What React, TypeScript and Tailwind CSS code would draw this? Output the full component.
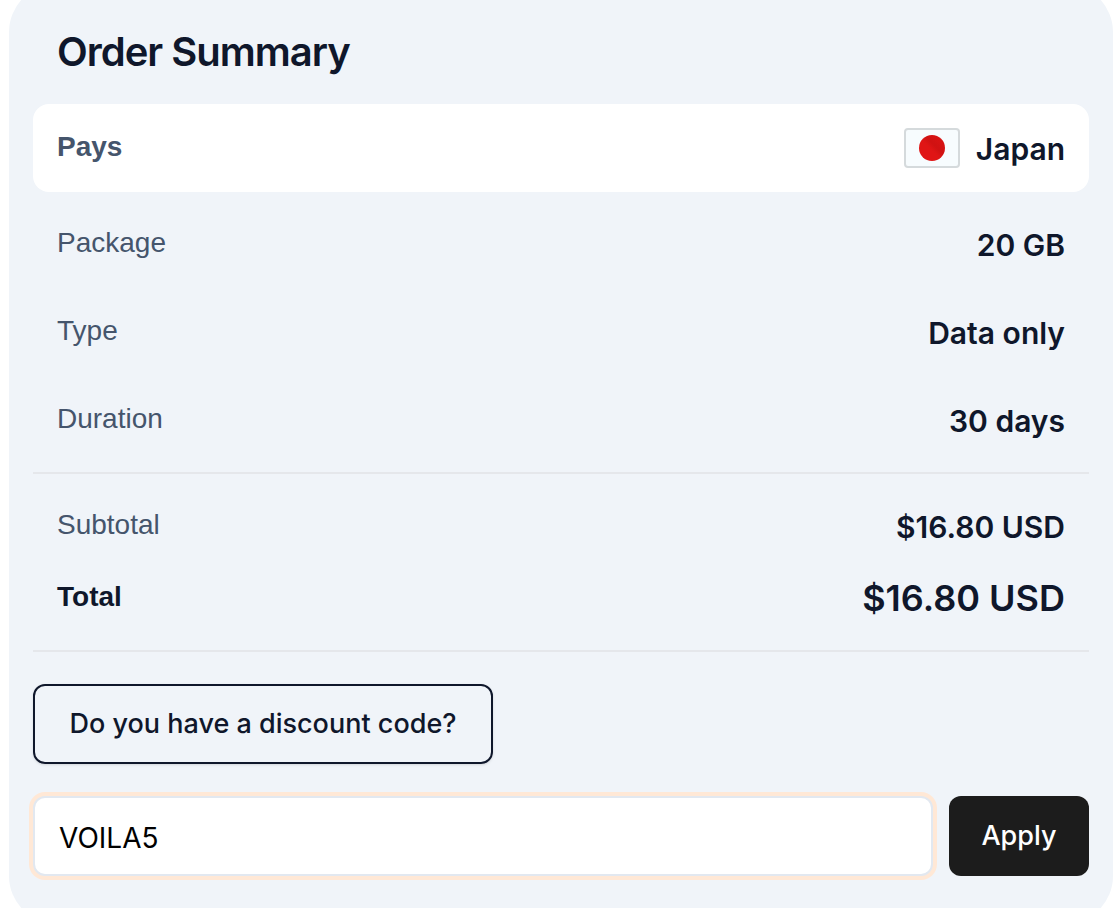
interface SummaryRowProps {
  label: string;
  children: React.ReactNode;
  icon?: React.ReactNode;
  clazzName?: string;
  labelClazzName?: string;
  valueClazzName?: string;
}

export default function App() {
  return (
    <main className="h-screen overflow-hidden bg-white pl-[9px] pr-[7px]">
      <section className="-mt-4 rounded-[48px] bg-[#f0f4f9] px-6 pt-10 pb-12 font-['Inter',sans-serif] text-slate-900">
        <h1 className="px-6 mb-6 text-[40px] leading-14 font-semibold tracking-tight">
          Order Summary
        </h1>

        <dl>
          <SummaryRow
            label="Pays"
            icon={<JapanFlag />}
            clazzName="mb-2 rounded-2xl bg-white py-6"
            labelClazzName="font-bold text-slate-600"
          >
            Japan
          </SummaryRow>
          <SummaryRow label="Package" clazzName="py-6">20 GB</SummaryRow>
          <SummaryRow label="Type" clazzName="py-6">Data only</SummaryRow>
          <SummaryRow label="Duration" clazzName="py-6">30 days</SummaryRow>
        </dl>

        <dl className="mt-2 border-y-2 border-gray-200 py-8">
          <SummaryRow label="Subtotal" clazzName="mb-8">$16.80 USD</SummaryRow>
          <SummaryRow
            label="Total"
            labelClazzName="font-bold text-slate-900"
            valueClazzName="text-4xl leading-10"
          >
            $16.80 USD
          </SummaryRow>
        </dl>

        <button
          type="button"
          className="mt-8 h-20 min-w-[460px] rounded-xl border-2 border-slate-900 px-6 text-[27px] font-medium shadow-sm"
        >
          Do you have a discount code?
        </button>

        <form className="mt-8 flex gap-4" onSubmit={(e) => e.preventDefault()}>
          <input
            type="text"
            aria-label="Discount code"
            defaultValue="VOILA5"
            className="h-20 min-w-0 flex-1 rounded-xl border-2 border-slate-200 bg-white px-6 pt-1 text-[28px] text-black outline-none ring-4 ring-[#ffe8d6]"
          />
          <button
            type="submit"
            className="h-20 min-w-[140px] rounded-xl bg-[#1c1c1c] px-6 text-[27px] font-medium text-white"
          >
            Apply
          </button>
        </form>
      </section>
    </main>
  );
}

function SummaryRow({
  label,
  children,
  icon,
  clazzName = "",
  labelClazzName = "text-slate-600",
  valueClazzName = "text-[30px] leading-[42px]"
}: SummaryRowProps) {
  return (
    <div className={`flex items-start justify-between px-6 ${clazzName}`}>
      <dt className={`font-['Liberation_Sans',sans-serif] text-[28px] leading-[38px] ${labelClazzName}`}>
        {label}
      </dt>
      <dd className="flex h-10 items-start gap-4 font-semibold">
        {icon}
        <span className={valueClazzName}>{children}</span>
      </dd>
    </div>
  );
}

function JapanFlag() {
  return (
    <svg width="56" height="40" viewBox="0 0 56 40" aria-hidden="true">
      <defs>
        <linearGradient id="sun" x1="0" y1="1" x2="1" y2="0">
          <stop offset="0" stopColor="#e01515" />
          <stop offset="0.45" stopColor="#e01515" />
          <stop offset="0.6" stopColor="#d01212" />
          <stop offset="1" stopColor="#dc1414" />
        </linearGradient>
      </defs>
      <rect x="1" y="1" width="54" height="38" rx="3" fill="#f7fcfe" stroke="#d5dadc" strokeWidth="2" />
      <circle cx="28" cy="20" r="13" fill="url(#sun)" />
    </svg>
  );
}
